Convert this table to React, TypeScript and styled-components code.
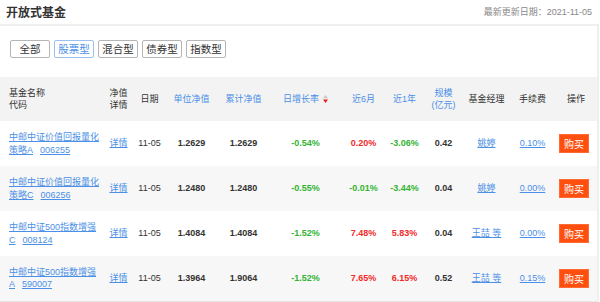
import React from "react";
import styled, { createGlobalStyle } from "styled-components";

const GlobalStyle = createGlobalStyle`
  html, body { margin: 0; padding: 0; background: #fff; }
  body {
    font-family: "Liberation Sans", Arial, "Noto Sans CJK SC", sans-serif;
    color: #333;
  }
  * { box-sizing: border-box; }
`;

const Page = styled.div`
  width: 600px;
  height: 302px;
  overflow: hidden;
`;

const TopBar = styled.div`
  height: 24px;
  display: flex;
  align-items: center;
  justify-content: space-between;
  padding: 0 8px 2px 6px;
`;

const Title = styled.h1`
  margin: 0;
  font-size: 12px;
  font-weight: bold;
  color: #333;
`;

const Updated = styled.span`
  font-size: 9px;
  color: #888;
`;

const Panel = styled.div`
  width: 599px;
  border-top: 2px solid #efefef;
  border-right: 2px solid #efefef;
  padding-top: 14px;
`;

const Filters = styled.div`
  display: flex;
  gap: 4px;
  padding-left: 10px;
  margin-bottom: 19px;
`;

const FilterButton = styled.button<{ $active?: boolean }>`
  width: 40px;
  height: 18px;
  padding: 0;
  font-family: inherit;
  font-size: 10.5px;
  line-height: 16px;
  background: #fff;
  border: 1px solid ${(p) => (p.$active ? "#9cc0f0" : "#b5b5b5")};
  color: ${(p) => (p.$active ? "#4b8fe6" : "#333")};
  border-radius: 2px;
  cursor: pointer;
`;

const Table = styled.table`
  width: 597px;
  border-collapse: collapse;
  table-layout: fixed;
  font-size: 9px;
`;

const HeadRow = styled.tr`
  height: 44px;
  background: #f3f3f3;
`;

const Th = styled.th<{ $blue?: boolean; $left?: boolean }>`
  padding: 0;
  font-weight: normal;
  line-height: 12px;
  text-align: ${(p) => (p.$left ? "left" : "center")};
  padding-left: ${(p) => (p.$left ? "9px" : "0")};
  color: ${(p) => (p.$blue ? "#4b8fe6" : "#333")};
  white-space: nowrap;
`;

const Row = styled.tr<{ $alt?: boolean }>`
  height: 45px;
  background: ${(p) => (p.$alt ? "#f7f7f7" : "#fff")};
  &:last-child { border-bottom: 1px solid #e6e6e6; }
`;

const Td = styled.td<{ $left?: boolean; $bold?: boolean; $tone?: "up" | "down" }>`
  padding: 0;
  line-height: 12.5px;
  text-align: ${(p) => (p.$left ? "left" : "center")};
  padding-left: ${(p) => (p.$left ? "9px" : "0")};
  font-weight: ${(p) => (p.$bold ? "bold" : "normal")};
  color: ${(p) =>
    p.$tone === "up" ? "#f22a2a" : p.$tone === "down" ? "#32b432" : "#333"};
`;

const OpCell = styled.td`
  padding: 0 4px 0 0;
  text-align: center;
`;

const Link = styled.a`
  color: #4b8fe6;
  text-decoration: underline;
  cursor: pointer;
`;

const CodeLink = styled(Link)`
  margin-left: 7px;
`;

const BuyButton = styled.button`
  width: 30px;
  height: 19px;
  padding: 0;
  border: 1px solid #ff6a35;
  background: #ff4f0f;
  color: #fff;
  font-family: inherit;
  font-size: 10px;
  cursor: pointer;
`;

const SortIcon = styled.svg`
  margin-left: 4px;
  vertical-align: -1px;
`;

type Fund = {
  name: [string, string];
  code: string;
  date: string;
  unit: string;
  cum: string;
  day: string;
  m6: string;
  y1: string;
  size: string;
  manager: string;
  fee: string;
};

const funds: Fund[] = [
  { name: ["中邮中证价值回报量化", "策略A"], code: "006255", date: "11-05", unit: "1.2629", cum: "1.2629", day: "-0.54%", m6: "0.20%", y1: "-3.06%", size: "0.42", manager: "姚婷", fee: "0.10%" },
  { name: ["中邮中证价值回报量化", "策略C"], code: "006256", date: "11-05", unit: "1.2480", cum: "1.2480", day: "-0.55%", m6: "-0.01%", y1: "-3.44%", size: "0.04", manager: "姚婷", fee: "0.00%" },
  { name: ["中邮中证500指数增强", "C"], code: "008124", date: "11-05", unit: "1.4084", cum: "1.4084", day: "-1.52%", m6: "7.48%", y1: "5.83%", size: "0.04", manager: "王喆 等", fee: "0.00%" },
  { name: ["中邮中证500指数增强", "A"], code: "590007", date: "11-05", unit: "1.3964", cum: "1.9064", day: "-1.52%", m6: "7.65%", y1: "6.15%", size: "0.52", manager: "王喆 等", fee: "0.15%" },
];

const tone = (v: string): "up" | "down" => (v.startsWith("-") ? "down" : "up");

const filters = ["全部", "股票型", "混合型", "债券型", "指数型"];

const widths = [103, 31, 31, 53, 51, 73, 43, 39, 39, 47, 45, 42];

export default function App() {
  return (
    <Page>
      <GlobalStyle />
      <TopBar>
        <Title>开放式基金</Title>
        <Updated>最新更新日期：2021-11-05</Updated>
      </TopBar>
      <Panel>
        <Filters>
          {filters.map((f) => (
            <FilterButton key={f} $active={f === "股票型"}>
              {f}
            </FilterButton>
          ))}
        </Filters>
        <Table>
          <colgroup>
            {widths.map((w, i) => (
              <col key={i} style={{ width: w }} />
            ))}
          </colgroup>
          <thead>
            <HeadRow>
              <Th $left>基金名称<br />代码</Th>
              <Th>净值<br />详情</Th>
              <Th>日期</Th>
              <Th $blue>单位净值</Th>
              <Th $blue>累计净值</Th>
              <Th $blue>
                日增长率
                <SortIcon width="5" height="8" viewBox="0 0 5 8">
                  <path d="M2.5 0 L5 3.2 L0 3.2 Z" fill="#c8c8c8" />
                  <path d="M0 4.6 L5 4.6 L2.5 8 Z" fill="#f01c1c" />
                </SortIcon>
              </Th>
              <Th $blue>近6月</Th>
              <Th $blue>近1年</Th>
              <Th $blue>规模<br />(亿元)</Th>
              <Th>基金经理</Th>
              <Th>手续费</Th>
              <Th>操作</Th>
            </HeadRow>
          </thead>
          <tbody>
            {funds.map((f, i) => (
              <Row key={f.code} $alt={i % 2 === 1}>
                <Td $left>
                  <Link>
                    {f.name[0]}
                    <br />
                    {f.name[1]}
                  </Link>
                  <CodeLink>{f.code}</CodeLink>
                </Td>
                <Td>
                  <Link>详情</Link>
                </Td>
                <Td>{f.date}</Td>
                <Td $bold>{f.unit}</Td>
                <Td $bold>{f.cum}</Td>
                <Td $bold $tone={tone(f.day)}>{f.day}</Td>
                <Td $bold $tone={tone(f.m6)}>{f.m6}</Td>
                <Td $bold $tone={tone(f.y1)}>{f.y1}</Td>
                <Td $bold>{f.size}</Td>
                <Td>
                  <Link>{f.manager}</Link>
                </Td>
                <Td>
                  <Link>{f.fee}</Link>
                </Td>
                <OpCell>
                  <BuyButton>购买</BuyButton>
                </OpCell>
              </Row>
            ))}
          </tbody>
        </Table>
      </Panel>
    </Page>
  );
}
